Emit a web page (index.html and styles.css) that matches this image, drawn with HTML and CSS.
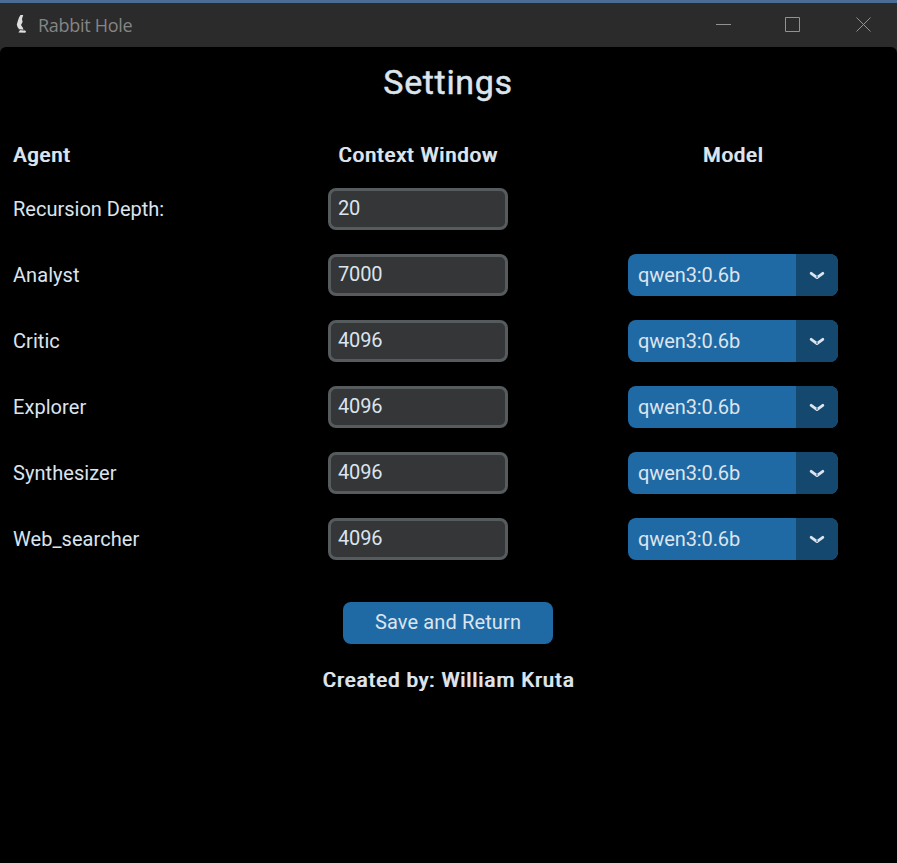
FILE: index.html
```html
<!DOCTYPE html>
<html lang="en">
<head>
<meta charset="utf-8">
<title>Rabbit Hole</title>
<link rel="stylesheet" href="styles.css">
</head>
<body>
<svg width="0" height="0" class="defs"><symbol id="chevron" viewBox="0 0 16 10"><path d="M2.2 2.4 L8 6.6 L13.8 2.4" fill="none" stroke="#dce4ee" stroke-width="2.9" stroke-linecap="round" stroke-linejoin="round"/><path d="M6.8 5.5h2.4L8 7z" fill="#14486f"/></symbol></svg>
<header class="titlebar">
  <svg class="logo" width="12" height="20" viewBox="0 0 12 20"><path d="M5.5 1 L8.2 1 L7 5 L7.6 8 L6 11 L8 14 L8.4 16 L11 17 L10.4 18.8 L3.4 18.4 L5 16.2 L2.6 13.2 L1.8 10.5 L2.8 7 L4 3.5z" fill="#dedede"/><path d="M3.5 15.4 L9 16.2" stroke="#555" stroke-width="1"/></svg>
  <span class="app-name">Rabbit Hole</span>
  <div class="controls">
    <svg width="16" height="16" viewBox="0 0 16 16"><path d="M0 8.5h15"/></svg>
    <svg class="maximize" width="16" height="16" viewBox="0 0 16 16"><path d="M.5 1.5h14v14h-14z"/></svg>
    <svg width="16" height="16" viewBox="0 0 16 16"><path d="M.5 1.5l14 14M14.5 1.5l-14 14"/></svg>
  </div>
</header>
<main class="window">
  <h1>Settings</h1>
  <div class="row head"><span class="agent">Agent</span><span class="center context">Context Window</span><span class="center">Model</span></div>
  <div class="row"><span class="label depth">Recursion Depth:</span><div class="entry">20</div></div>
  <div class="row"><span class="label">Analyst</span><div class="entry">7000</div><div class="select"><span>qwen3:0.6b</span><i><svg width="16" height="10"><use href="#chevron"/></svg></i></div></div>
  <div class="row"><span class="label">Critic</span><div class="entry">4096</div><div class="select"><span>qwen3:0.6b</span><i><svg width="16" height="10"><use href="#chevron"/></svg></i></div></div>
  <div class="row"><span class="label">Explorer</span><div class="entry">4096</div><div class="select"><span>qwen3:0.6b</span><i><svg width="16" height="10"><use href="#chevron"/></svg></i></div></div>
  <div class="row"><span class="label">Synthesizer</span><div class="entry">4096</div><div class="select"><span>qwen3:0.6b</span><i><svg width="16" height="10"><use href="#chevron"/></svg></i></div></div>
  <div class="row"><span class="label">Web_searcher</span><div class="entry">4096</div><div class="select"><span>qwen3:0.6b</span><i><svg width="16" height="10"><use href="#chevron"/></svg></i></div></div>
  <button class="save">Save and Return</button>
  <p class="credit">Created by: William Kruta</p>
</main>
</body>
</html>
```
FILE: styles.css
```css
* { box-sizing: border-box; }
body { margin: 0; height: 863px; overflow: hidden; display: flex; flex-direction: column; background: #2b2b2b; color: #dce4ee; font: 20px/24px Roboto, sans-serif; }
.defs { position: absolute; }
.titlebar { height: 47px; flex: none; display: flex; align-items: center; padding: 0 25px 0 15px; border-top: 3px solid #4d6c94; background: #2b2b2b; color: #858585; }
.logo { margin-top: -2px; }
.app-name { margin: 0 0 0 11px; font: 18px/24px "Open Sans", sans-serif; letter-spacing: -0.3px; }
.controls { margin-left: auto; display: flex; gap: 54px; margin-top: -2px; }
.controls svg { fill: none; stroke: #929292; stroke-width: 1; }
.controls .maximize { margin: 0 1px 0 -1px; }
.window { flex: 1; background: #000; border-radius: 6px 6px 0 0; display: flex; flex-direction: column; }
h1 { margin: 15px 1px 0 0; text-align: center; font-size: 34px; line-height: 40px; font-weight: 400; -webkit-text-stroke: 0.5px; letter-spacing: 0.65px; }
.row { display: grid; grid-template-columns: 315px 180px 210px; column-gap: 0; padding-left: 13px; height: 42px; align-items: center; margin-bottom: 24px; }
.row > :nth-child(3) { margin-left: 120px; width: 210px; }
.head { height: 24px; margin: 41px 0 21px; font-weight: 400; -webkit-text-stroke: 0.2px; text-shadow: 1px 0 currentColor; letter-spacing: 1px; }
.center { text-align: center; }
.label { letter-spacing: 0.06px; }
.depth { letter-spacing: 0; }
.entry { height: 42px; padding: 5px 7px; border: 3px solid #565b5e; border-radius: 8px; background: #343638; letter-spacing: -0.15px; }
.select { height: 42px; display: flex; border-radius: 8px; overflow: hidden; background: #1f6aa5; }
.select span { width: 168px; padding: 9px 10px; letter-spacing: -0.1px; }
.select i { width: 42px; padding-top: 2px; display: flex; align-items: center; justify-content: center; background: #14486f; }
.save { align-self: center; width: 210px; height: 42px; margin: 18px 1px 0 0; padding: 0 0 2px; border: 0; border-radius: 8px; background: #1f6aa5; color: #dce4ee; font: inherit; letter-spacing: 0.13px; }
.credit { margin: 24px 0 0; text-align: center; font-weight: 400; -webkit-text-stroke: 0.2px; text-shadow: 1px 0 currentColor; letter-spacing: 1.15px; }
```
